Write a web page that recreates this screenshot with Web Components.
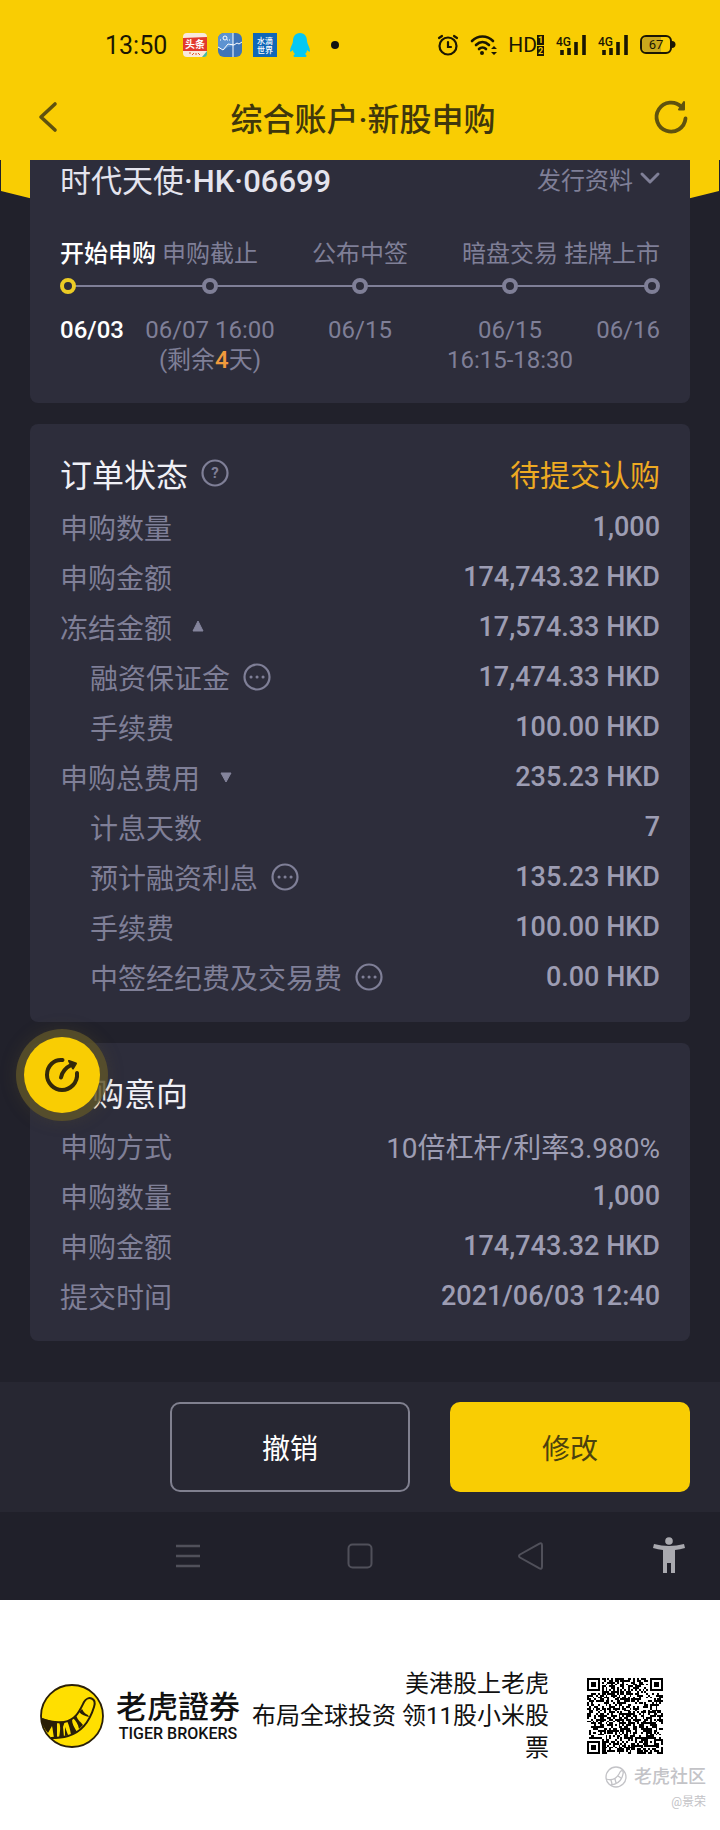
<!DOCTYPE html>
<html lang="zh-CN">
<head>
<meta charset="utf-8">
<meta name="viewport" content="width=device-width, initial-scale=1">
<title>综合账户·新股申购</title>
<style>
    body {
        margin: 0;
        background: #fff;
        font-family: Roboto, "Noto Sans CJK SC", sans-serif;
        --yellow: #f9cd03;
        --page: #21212b;
        --card: #2d2d3b;
        --label: #7f7f97;
        --value: #9d9db3;
        --light: #f0f0f6;
    }
</style>
</head>
<body>
<ipo-page>
    <status-bar slot="top" time="13:50"></status-bar>
    <title-bar slot="top">综合账户·新股申购</title-bar>

    <info-card flush>
        <stock-heading name="时代天使" code="·HK·06699">发行资料</stock-heading>
        <step-line>
            <step-item active name="开始申购">06/03</step-item>
            <step-item name="申购截止">06/07 16:00<br>(剩余<b>4</b>天)</step-item>
            <step-item name="公布中签">06/15</step-item>
            <step-item name="暗盘交易">06/15<br>16:15-18:30</step-item>
            <step-item name="挂牌上市">06/16</step-item>
        </step-line>
    </info-card>

    <info-card>
        <card-heading help state="待提交认购">订单状态</card-heading>
        <info-row label="申购数量">1,000</info-row>
        <info-row label="申购金额">174,743.32 HKD</info-row>
        <info-row label="冻结金额" toggle="up">17,574.33 HKD</info-row>
        <info-row label="融资保证金" sub more>17,474.33 HKD</info-row>
        <info-row label="手续费" sub>100.00 HKD</info-row>
        <info-row label="申购总费用" toggle="down">235.23 HKD</info-row>
        <info-row label="计息天数" sub>7</info-row>
        <info-row label="预计融资利息" sub more>135.23 HKD</info-row>
        <info-row label="手续费" sub>100.00 HKD</info-row>
        <info-row label="中签经纪费及交易费" sub more>0.00 HKD</info-row>
    </info-card>

    <info-card>
        <float-button></float-button>
        <card-heading>申购意向</card-heading>
        <info-row label="申购方式" plain>10倍杠杆/利率3.980%</info-row>
        <info-row label="申购数量">1,000</info-row>
        <info-row label="申购金额">174,743.32 HKD</info-row>
        <info-row label="提交时间">2021/06/03 12:40</info-row>
    </info-card>

    <action-bar slot="bottom"></action-bar>
    <nav-bar slot="bottom"></nav-bar>
</ipo-page>
<share-footer>美港股上老虎<br>布局全球投资 领11股小米股票</share-footer>

<script>
const icons = {
    toutiao: [24, 24, `
        <rect width="24" height="24" rx="4" fill="#f8e9dc"/>
        <path d="M0 5l24-1v14H0z" fill="#e23a2e"/>
        <text x="12" y="15" font-size="10" font-weight="700" text-anchor="middle" fill="#fff">头条</text>
        <path d="M6 20h2m1 2 2-2m2 0v2m2-2 2 2" stroke="#e0552e" fill="none"/>
        <path d="M19 24l5-6v3a3 3 0 0 1-3 3z" fill="#48b9a0"/>`],
    stocks: [24, 24, `
        <rect width="24" height="24" rx="6" fill="#3f74b8"/>
        <path d="M0 8V6a6 6 0 0 1 6-6h9v13l-5 1-4 3-6-3z" fill="#5d93d1"/>
        <path d="M0 14l5 3 5-6 6 1 3-2 2 1 3-2M15 0v24" stroke="#fff" fill="none" stroke-width="1"/>
        <circle cx="7" cy="5" r="2" fill="none" stroke="#fff"/>
        <path d="M2 7h2m5 0h4" stroke="#fff" stroke-dasharray="1 1"/>`],
    water: [24, 24, `
        <rect width="24" height="24" fill="#1067b8"/>
        <g font-size="8" font-weight="500" text-anchor="middle" fill="#fff">
            <text x="12" y="11">水滴</text><text x="12" y="20">世界</text>
        </g>`],
    qq: [24, 24, `
        <path d="M12 0C7 0 5 4 5 8c0 3-3 6-3 10 0 1 1 1 3-1 0 2 1 3 2 4-2 1-2 3 0 3h10c2 0 2-2 0-3 1-1 2-2 2-4 2 2 3 2 3 1 0-4-3-7-3-10 0-4-2-8-7-8z" fill="#05c8f4"/>`],
    dot: [24, 24, `<circle cx="12" cy="12" r="4" fill="#111"/>`],
    alarm: [20, 22, `
        <g fill="none" stroke="#1b1703" stroke-width="2.200" stroke-linecap="round">
            <circle cx="10" cy="12" r="8.500"/><path d="M10 8v5h3M1 4l3-2M19 4l-3-2"/>
        </g>`],
    wifi: [26, 22, `
        <g fill="none" stroke="#1b1703" stroke-width="2.600" stroke-linecap="round">
            <path d="M2 7c6-6 15-6 21 0M6 11c4-4 9-4 13 0M9 15c2-2 5-2 7 0"/>
        </g>
        <circle cx="12" cy="19" r="2" fill="#1b1703"/>
        <path d="M21 15l3-3 3 3zM21 18l3 3 3-3z" fill="#1b1703"/>`],
    signal: [30, 22, `
        <text x="0" y="12" font-size="12" font-weight="500" fill="#1b1703">4G</text>
        <path d="M6 16v5M13 14v7M20 8v13M28 1v20" stroke="#1b1703" stroke-width="3.600"/>`],
    battery: [34, 20, `
        <path d="M7 2h14v15H7a5 5 0 0 1-5-5V7a5 5 0 0 1 5-5z" fill="#c8a71c"/>
        <rect x="1" y="1" width="30" height="17" rx="5" fill="none" stroke="#1b1703" stroke-width="2"/>
        <path d="M32 6a3 3 0 0 1 0 7z" fill="#1b1703"/>
        <text x="16" y="14" font-size="13" text-anchor="middle" fill="#1b1703">67</text>`],
    back: [20, 32, `<path d="M17 3 3 16l14 13" fill="none" stroke="#5f520f" stroke-width="3.600" stroke-linecap="round" stroke-linejoin="round"/>`],
    refresh: [34, 34, `
        <path d="M31.500 18.500A14.500 14.500 0 1 1 27.500 7" fill="none" stroke="#5f520f" stroke-width="3.800" stroke-linecap="round"/>
        <path d="M30 2v7.500h-5z" fill="#5f520f" stroke="#5f520f" stroke-width="2" stroke-linejoin="round"/>`],
    chevron: [20, 12, `<path d="M2 2l8 8 8-8" fill="none" stroke="#7f7f97" stroke-width="3" stroke-linecap="round" stroke-linejoin="round"/>`],
    help: [28, 28, `
        <circle cx="14" cy="14" r="12.500" fill="none" stroke="#7f7f97" stroke-width="2.200"/>
        <text x="14" y="19" font-size="15" font-weight="700" text-anchor="middle" fill="#7f7f97">?</text>`],
    more: [28, 28, `
        <circle cx="14" cy="14" r="12.500" fill="none" stroke="#7f7f97" stroke-width="2.200"/>
        <path d="M8 14h.1M14 14h.1M20 14h.1" stroke="#7f7f97" stroke-width="3" stroke-linecap="round"/>`],
    up: [12, 12, `<path d="M6 0l5 10H1z" fill="#84849c" stroke="#84849c" stroke-linejoin="round"/>`],
    down: [12, 12, `<path d="M6 11l5-9H1z" fill="#84849c" stroke="#84849c" stroke-linejoin="round"/>`],
    menu: [24, 24, `<path d="M0 2h24M0 12h24M0 22h24" stroke="#50505a" stroke-width="2.500"/>`],
    home: [26, 26, `<rect x="1.500" y="1.500" width="23" height="23" rx="4" fill="none" stroke="#50505a" stroke-width="2"/>`],
    previous: [26, 28, `<path d="M2 12.500 21 1.800q3-1.500 3 1.500v21.400q0 3-3 1.500L2 15.500q-2-1.500 0-3z" fill="none" stroke="#50505a" stroke-width="2"/>`],
    person: [32, 38, `
        <circle cx="16" cy="4" r="3.800" fill="#a9a9af"/>
        <path d="M1 7q15 4 30 0l1 4q-5 1.500-10 2v23h-4V26h-4v10h-4V13q-5-.5-10-2z" fill="#a9a9af"/>`],
    gauge: [36, 36, `
        <g fill="none" stroke="#33290a" stroke-width="4" stroke-linecap="round" stroke-linejoin="round">
            <path d="M18.500 3C10 2 3 9 3 18c0 8 7 15 15 15s16-7 15-17M17 20.500c1-6 5-10 11-13"/>
        </g>
        <path d="M25 4l7 2.500-3 5z" fill="#33290a" stroke="#33290a" stroke-width="2" stroke-linejoin="round"/>`],
    tiger: [64, 64, `
        <circle cx="32" cy="32" r="31" fill="#ffdf00" stroke="#2a1f08" stroke-width="1.800"/>
        <path d="M2 35c8 3 15 4 22 3 12-2 16-12 20-20 4-7 13-4 10 5-4 13-12 25-26 29-7 2-12 2-17 2" fill="none" stroke="#2a1f08" stroke-width="2"/>
        <path d="M1 34l11 3 5 1v16h-3c-1-5-1-8-2-12l-4 7c-4-4-6-9-7-15zM19 38l6-1-2 6 1 10-5 1c1-6 2-11 0-16zM27 37l5-2c0 5 2 8 5 13l-6 3c-1-6-2-10-4-14zM25 43l3 8-3 1zM33 34l3-3c2 6 5 7 7 10l-4 4c-1-5-3-8-6-11zM39 28l3-3c2 4 4 5 6 6l1 2c-4-1-7-2-10-5z" fill="#2a1f08"/>`],
    mark: [22, 22, `
        <g fill="none" stroke="#c3c3c7" stroke-width="1.300">
            <circle cx="11" cy="11" r="10"/>
            <path d="M1 13c6 2 10 0 13-5 2-5 5-4 4 0-1 6-5 10-12 11M6 14l1 4M10 13l1 4M13 10l3 2"/>
        </g>`]
};

const define = (name, css, render) => window.customElements.define(name, class extends HTMLElement {
    constructor() {
        super();
        this.attachShadow({ mode: 'open' });
    }
    connectedCallback() {
        this.shadowRoot.innerHTML = `<style>
            * { box-sizing: border-box; }
            button { padding: 0; border: 0; background: none; color: inherit; font: inherit; cursor: pointer; }
            ${css}
        </style>${render(this)}`;
    }
});
const attr = (el, name) => el.getAttribute(name) || '';
const button = (icon, label) => `<button aria-label="${label}"><ui-icon name="${icon}"></ui-icon></button>`;

define('ui-icon', `
    :host { display: inline-flex; flex: none; }
    svg { display: block; overflow: visible; }
`, el => {
    const [w, h, body] = icons[attr(el, 'name')];
    return `<svg width="${w}" height="${h}" viewBox="0 0 ${w} ${h}" aria-hidden="true">${body}</svg>`;
});

define('ipo-page', `
    :host { display: block; background: var(--page); }
    header { background: var(--yellow); }
    main {
        position: relative;
        display: grid;
        gap: 21px;
        padding: 0 30px 41px;
        isolation: isolate;
    }
    .tail {
        position: absolute;
        inset: 0 1px auto;
        z-index: -1;
        height: 120px;
        background: var(--yellow);
        clip-path: polygon(0 0, 100% 0, 100% 31px, 50% 100%, 0 31px);
    }
`, () => `
    <header><slot name="top"></slot></header>
    <main><div class="tail"></div><slot></slot></main>
    <slot name="bottom"></slot>
`);

define('status-bar', `
    :host {
        display: flex;
        align-items: center;
        height: 90px;
        padding: 0 46px 0 105px;
        color: #1b1703;
        font-size: 25px;
    }
    .apps { display: flex; gap: 11px; margin-left: 16px; }
    .system { display: flex; align-items: center; gap: 12px; margin-left: auto; }
    .hd { display: flex; align-items: center; font-size: 21px; }
    .sim {
        display: grid;
        gap: 1px;
        font-size: 9px;
        line-height: 10px;
        font-weight: 700;
    }
    .sim span { width: 7px; background: #1b1703; color: var(--yellow); text-align: center; }
`, el => `
    <time>${attr(el, 'time')}</time>
    <div class="apps">${['toutiao', 'stocks', 'water', 'qq', 'dot'].map(n => `<ui-icon name="${n}"></ui-icon>`).join('')}</div>
    <div class="system">
        <ui-icon name="alarm"></ui-icon>
        <ui-icon name="wifi"></ui-icon>
        <div class="hd">HD<div class="sim"><span>1</span><span>2</span></div></div>
        <ui-icon name="signal"></ui-icon>
        <ui-icon name="signal"></ui-icon>
        <ui-icon name="battery"></ui-icon>
    </div>
`);

define('title-bar', `
    :host {
        display: grid;
        grid-template-columns: 1fr auto 1fr;
        align-items: center;
        height: 54px;
        padding: 0 32px 16px 38px;
        margin-bottom: 0;
    }
    h1 { margin: 0; color: #40370c; font-size: 32px; font-weight: 500; }
    button { display: flex; justify-self: start; }
    button:last-child { justify-self: end; }
`, () => `${button('back', '返回')}<h1><slot></slot></h1>${button('refresh', '刷新')}`);

define('info-card', `
    :host {
        position: relative;
        display: block;
        padding: 22px 30px 20px;
        border-radius: 8px;
        background: var(--card);
    }
    :host([flush]) { padding: 0 30px 28px; border-radius: 0 0 8px 8px; }
`, () => '<slot></slot>');

define('stock-heading', `
    :host { display: flex; align-items: center; justify-content: space-between; height: 36px; margin-bottom: 43px; }
    h2 { margin: 0; color: #e4e4ee; font-size: 31px; font-weight: 400; }
    h2 span { font-weight: 500; }
    button { display: flex; align-items: center; gap: 7px; color: var(--label); font-size: 24px; }
`, el => `
    <h2>${attr(el, 'name')}<span>${attr(el, 'code')}</span></h2>
    <button><slot></slot><ui-icon name="chevron"></ui-icon></button>
`);

define('step-line', `
    :host {
        position: relative;
        display: grid;
        grid-template-columns: 1fr 2fr 2fr 2fr 1fr;
    }
    :host::before {
        content: "";
        position: absolute;
        inset: 46px 8px auto;
        height: 2px;
        background: var(--label);
    }
    ::slotted(:first-child) { --align: flex-start; }
    ::slotted(:last-child) { --align: flex-end; }
`, () => '<slot></slot>');

define('step-item', `
    :host {
        position: relative;
        display: flex;
        flex-direction: column;
        align-items: var(--align, center);
        min-width: 0;
        color: var(--label);
        font-size: 24px;
        line-height: 30px;
        text-align: center;
        white-space: nowrap;
    }
    :host([active]) { color: #fff; font-weight: 500; }
    i {
        width: 16px;
        height: 16px;
        margin: 9px 0 21px;
        border: 4px solid var(--label);
        border-radius: 50%;
        background: var(--card);
    }
    :host([active]) i { border-color: #ebcb25; }
    ::slotted(b) { color: #f09a3c; font-weight: 500; }
`, el => `<span>${attr(el, 'name')}</span><i></i><div><slot></slot></div>`);

define('card-heading', `
    :host { display: flex; align-items: center; height: 54px; gap: 13px; margin-bottom: 2px; }
    h2 { margin: 0; color: var(--light); font-size: 32px; font-weight: 400; }
    button { display: flex; }
    .state { margin-left: auto; color: #eeaa22; font-size: 30px; }
`, el => `
    <h2><slot></slot></h2>
    ${el.hasAttribute('help') ? button('help', '说明') : ''}
    <span class="state">${attr(el, 'state')}</span>
`);

define('info-row', `
    :host { display: block; }
    dl { display: flex; align-items: center; justify-content: space-between; height: 50px; margin: 0; }
    dt { display: flex; align-items: center; gap: 13px; color: var(--label); font-size: 28px; }
    :host([sub]) dt { padding-left: 30px; }
    :host([toggle]) dt { gap: 20px; }
    dd { margin: 0; color: var(--value); font-size: 27px; font-weight: 500; }
    :host([plain]) dd { font-size: 28px; font-weight: 400; }
    button { display: flex; }
`, el => `
    <dl>
        <dt>${attr(el, 'label')}
            ${el.hasAttribute('toggle') ? button(attr(el, 'toggle'), '展开或收起') : ''}
            ${el.hasAttribute('more') ? button('more', '更多') : ''}
        </dt>
        <dd><slot></slot></dd>
    </dl>
`);

define('float-button', `
    :host { position: absolute; top: -6px; left: -6px; z-index: 1; }
    button {
        display: grid;
        place-items: center;
        width: 76px;
        height: 76px;
        border-radius: 50%;
        background: var(--yellow);
        box-shadow: 0 0 0 8px #5e5429cc, 0 0 16px 8px #5e542944;
    }
`, () => button('gauge', '快捷入口'));

define('action-bar', `
    :host {
        display: flex;
        justify-content: flex-end;
        gap: 40px;
        padding: 20px 30px;
        background: #272732;
    }
    button {
        width: 240px;
        height: 90px;
        border-radius: 10px;
        color: #fff;
        font-size: 28px;
    }
    .cancel { border: 2px solid #80808f; }
    .edit { background: var(--yellow); color: #4d420d; }
`, () => '<button class="cancel">撤销</button><button class="edit">修改</button>');

define('nav-bar', `
    nav {
        display: grid;
        grid-template-columns: 3fr 5fr 5fr 5fr 3fr;
        height: 88px;
        background: #20202a;
    }
    button { display: grid; place-items: center; }
    /* the outer columns are half-width, so each of the first three buttons straddles a column line */
    button:first-child { grid-column: 1 / 3; padding-left: 102px; }
`, () => `<nav>${button('menu', '菜单')}${button('home', '主页')}${button('previous', '返回')}${button('person', '无障碍')}</nav>`);

define('qr-code', `
    :host { display: block; }
    svg { display: block; width: 76px; height: 76px; }
`, () => {
    const size = 41;
    let seed = 6699;
    let d = '';
    const ring = (x, y, cx, cy) => Math.max(Math.abs(x - cx), Math.abs(y - cy));
    const finders = [[3, 3], [size - 4, 3], [3, size - 4]];
    for (let y = 0; y < size; y++) {
        for (let x = 0; x < size; x++) {
            seed = (seed * 1103515245 + 12345) % 2147483648;
            let on = (seed >> 16) % 100 < 54;
            if (x === 6 || y === 6) {
                on = (x + y) % 2 === 0;
            }
            for (const [cx, cy] of finders) {
                const r = ring(x, y, cx, cy);
                if (r <= 4) {
                    on = r === 3 || r <= 1;
                }
            }
            const r = ring(x, y, size - 7, size - 7);
            if (r <= 2) {
                on = r !== 1;
            }
            if (on) {
                d += `M${x} ${y}h1v1h-1z`;
            }
        }
    }
    return `<svg viewBox="0 0 ${size} ${size}" shape-rendering="crispEdges" role="img" aria-label="二维码"><path d="${d}"/></svg>`;
});

define('share-footer', `
    :host { display: block; padding: 68px 14px 8px 40px; background: #fff; color: #111; }
    .row { display: flex; align-items: center; padding-right: 43px; }
    .brand { display: grid; justify-items: center; margin: 0 9px 0 12px; }
    strong { font-size: 31px; line-height: 36px; font-weight: 500; font-family: Roboto, "Noto Sans CJK TC", sans-serif; }
    small { font-size: 16px; line-height: 16px; font-weight: 500; }
    p { flex: 1; margin: 0; font-size: 24px; line-height: 32px; text-align: right; }
    qr-code { margin-left: 38px; }
    .mark { display: grid; justify-items: end; color: #c3c3c7; }
    .mark div { display: flex; align-items: center; gap: 7px; font-size: 18px; line-height: 26px; font-weight: 500; }
    .mark span { font-size: 12px; line-height: 24px; }
`, () => `
    <div class="row">
        <ui-icon name="tiger"></ui-icon>
        <div class="brand"><strong>老虎證券</strong><small>TIGER BROKERS</small></div>
        <p><slot></slot></p>
        <qr-code></qr-code>
    </div>
    <div class="mark"><div><ui-icon name="mark"></ui-icon>老虎社区</div><span>@景荣</span></div>
`);
</script>
</body>
</html>
